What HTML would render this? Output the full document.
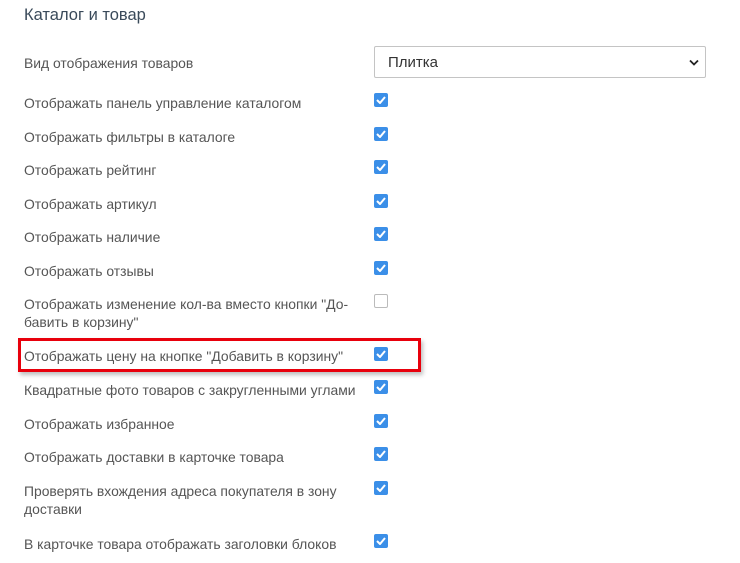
<!DOCTYPE html>
<html><head><meta charset="utf-8"><style>
body{margin:0;width:740px;height:563px;background:#fff;font-family:"Liberation Sans",sans-serif;position:relative;overflow:hidden}
.t{position:absolute;left:24px;font-size:13.9px;color:#555;line-height:18px;width:340px;margin-top:1px}
.c{position:absolute;left:374px;width:14px;height:14px;border-radius:2px;background:#3b8fe8}
.c svg{position:absolute;left:2px;top:3px}
.u{background:#fff;border:1px solid #bbb;width:12px;height:12px}
</style></head><body>
<div style="position:absolute;left:24px;top:6px;font-size:16.5px;color:#3a4a5a">Каталог и товар</div>
<div class="t" style="top:53px">Вид отображения товаров</div>
<div style="position:absolute;left:374px;top:46px;width:330px;height:30px;border:1px solid #c4c4c4;border-radius:2px">
<span style="position:absolute;left:13px;top:7px;font-size:15px;color:#333">Плитка</span>
<svg style="position:absolute;right:6px;top:12px" width="10" height="7" viewBox="0 0 10 7"><path d="M1 1.5l4 4 4-4" stroke="#222" stroke-width="1.8" fill="none"/></svg></div>
<div style="position:absolute;left:18px;top:338px;width:397px;height:28px;border:3px solid #e8000c;box-shadow:2px 3px 4px rgba(0,0,0,.25)"></div>
<div class="t" style="top:93px">Отображать панель управление каталогом</div>
<div class="t" style="top:127px">Отображать фильтры в каталоге</div>
<div class="t" style="top:160px">Отображать рейтинг</div>
<div class="t" style="top:194px">Отображать артикул</div>
<div class="t" style="top:227px">Отображать наличие</div>
<div class="t" style="top:261px">Отображать отзывы</div>
<div class="t" style="top:294px">Отображать изменение кол-ва вместо кнопки "До-<br>бавить в корзину"</div>
<div class="t" style="top:346px">Отображать цену на кнопке "Добавить в корзину"</div>
<div class="t" style="top:380px">Квадратные фото товаров с закругленными углами</div>
<div class="t" style="top:414px">Отображать избранное</div>
<div class="t" style="top:447px">Отображать доставки в карточке товара</div>
<div class="t" style="top:481px">Проверять вхождения адреса покупателя в зону<br>доставки</div>
<div class="t" style="top:534px">В карточке товара отображать заголовки блоков</div>
<div class="c" style="top:93px"><svg width="10" height="8"><path d="M1 4l3 3 5-6" stroke="#fff" stroke-width="2" fill="none"/></svg></div>
<div class="c" style="top:127px"><svg width="10" height="8"><path d="M1 4l3 3 5-6" stroke="#fff" stroke-width="2" fill="none"/></svg></div>
<div class="c" style="top:160px"><svg width="10" height="8"><path d="M1 4l3 3 5-6" stroke="#fff" stroke-width="2" fill="none"/></svg></div>
<div class="c" style="top:194px"><svg width="10" height="8"><path d="M1 4l3 3 5-6" stroke="#fff" stroke-width="2" fill="none"/></svg></div>
<div class="c" style="top:227px"><svg width="10" height="8"><path d="M1 4l3 3 5-6" stroke="#fff" stroke-width="2" fill="none"/></svg></div>
<div class="c" style="top:261px"><svg width="10" height="8"><path d="M1 4l3 3 5-6" stroke="#fff" stroke-width="2" fill="none"/></svg></div>
<div class="c u" style="top:294px"></div>
<div class="c" style="top:347px"><svg width="10" height="8"><path d="M1 4l3 3 5-6" stroke="#fff" stroke-width="2" fill="none"/></svg></div>
<div class="c" style="top:380px"><svg width="10" height="8"><path d="M1 4l3 3 5-6" stroke="#fff" stroke-width="2" fill="none"/></svg></div>
<div class="c" style="top:414px"><svg width="10" height="8"><path d="M1 4l3 3 5-6" stroke="#fff" stroke-width="2" fill="none"/></svg></div>
<div class="c" style="top:447px"><svg width="10" height="8"><path d="M1 4l3 3 5-6" stroke="#fff" stroke-width="2" fill="none"/></svg></div>
<div class="c" style="top:481px"><svg width="10" height="8"><path d="M1 4l3 3 5-6" stroke="#fff" stroke-width="2" fill="none"/></svg></div>
<div class="c" style="top:534px"><svg width="10" height="8"><path d="M1 4l3 3 5-6" stroke="#fff" stroke-width="2" fill="none"/></svg></div>
</body></html>
